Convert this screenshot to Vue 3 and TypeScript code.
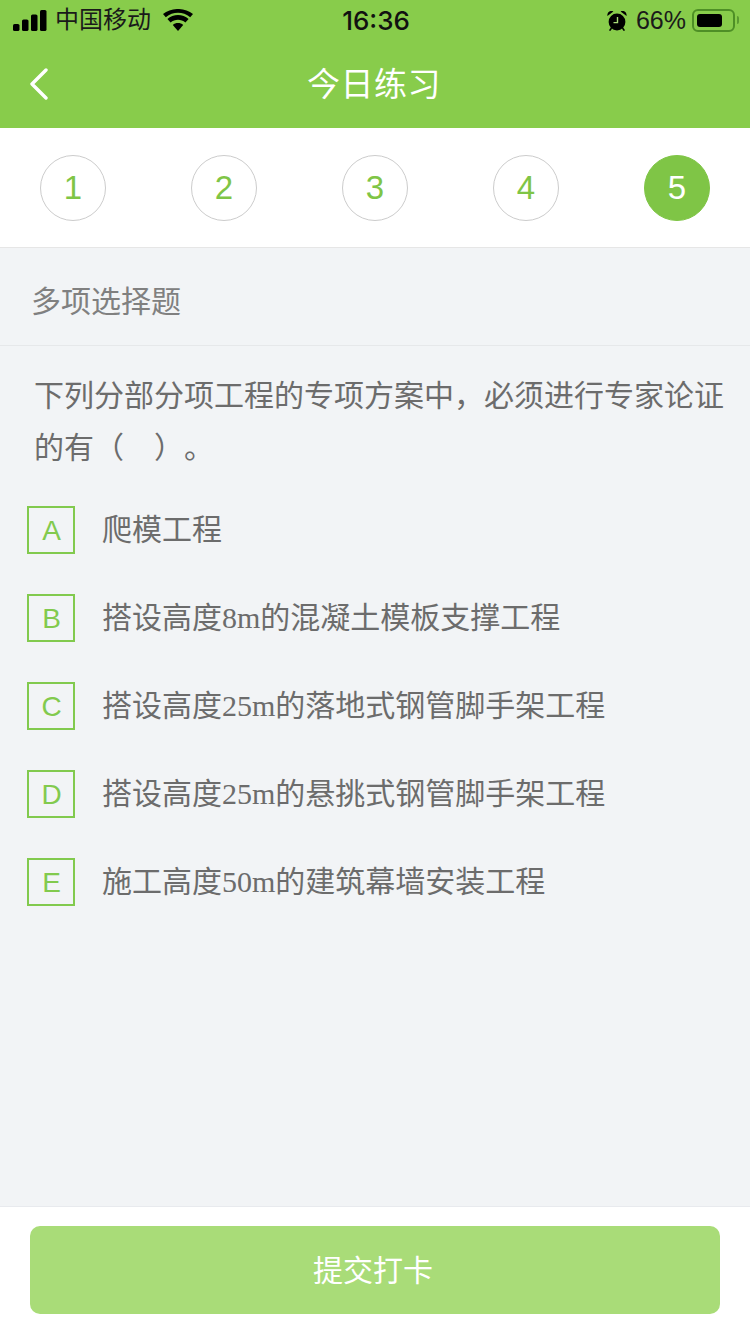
<script setup lang="ts">
const steps: number[] = [1, 2, 3, 4, 5]
const options: { key: string; text: string }[] = [
  { key: 'A', text: '爬模工程' },
  { key: 'B', text: '搭设高度8m的混凝土模板支撑工程' },
  { key: 'C', text: '搭设高度25m的落地式钢管脚手架工程' },
  { key: 'D', text: '搭设高度25m的悬挑式钢管脚手架工程' },
  { key: 'E', text: '施工高度50m的建筑幕墙安装工程' }
]
</script>

<template>
  <div class="page">
    <header class="head">
      <div class="status">
        <div class="status-left">
          <svg class="signal" width="34" height="21" viewBox="0 0 34 21">
            <rect x="0" y="14" width="6.5" height="7" rx="1.6" />
            <rect x="9" y="9.5" width="6.5" height="11.5" rx="1.6" />
            <rect x="18" y="4.5" width="6.5" height="16.5" rx="1.6" />
            <rect x="27" y="0" width="6.5" height="21" rx="1.6" />
          </svg>
          <span class="carrier">中国移动</span>
          <svg class="wifi" width="30" height="22" viewBox="0 0 30 22">
            <path d="M15 22 L9.8 16 C12.6 13.4 17.4 13.4 20.2 16 Z" />
            <path d="M7.6 13.6 L4.4 10 C10.2 4.8 19.8 4.8 25.6 10 L22.4 13.6 C18.2 9.8 11.8 9.8 7.6 13.6 Z" />
            <path d="M2.8 8.2 L0 5 C8.2 -1.7 21.8 -1.7 30 5 L27.2 8.2 C20 2.4 10 2.4 2.8 8.2 Z" />
          </svg>
        </div>
        <span class="time">16:36</span>
        <div class="status-right">
          <svg class="alarm" width="20" height="21" viewBox="0 0 20 21">
            <circle cx="10" cy="12" r="8.4" />
            <path d="M0.4 6 C0 2 3.4 0 6.4 1.4 Z M19.6 6 C20 2 16.6 0 13.6 1.4 Z" />
            <path d="M4.5 18 L2.6 20.6 M15.5 18 L17.4 20.6" stroke="#000" stroke-width="1.6" />
            <path d="M10.5 7 V12.6 H6.5" fill="none" stroke="#a9dc78" stroke-width="1.4" />
          </svg>
          <span class="percent">66%</span>
          <div class="battery">
            <div class="battery-fill"></div>
          </div>
          <div class="battery-cap"></div>
        </div>
      </div>
      <nav class="nav">
        <svg class="back" width="20" height="32" viewBox="0 0 20 32">
          <path d="M17 2 L3 16 L17 30" fill="none" stroke="#fff" stroke-width="3.4" stroke-linecap="round" stroke-linejoin="round" />
        </svg>
        <span class="nav-title">今日练习</span>
        <span></span>
      </nav>
    </header>

    <section class="steps">
      <div v-for="n in steps" :key="n" class="step" :class="{ current: n === 5 }">{{ n }}</div>
    </section>

    <main class="body">
      <div class="type">多项选择题</div>
      <p class="question">下列分部分项工程的专项方案中，必须进行专家论证的有（　）。</p>
      <ul class="options">
        <li v-for="o in options" :key="o.key" class="option">
          <span class="option-key">{{ o.key }}</span>
          <span class="option-text">{{ o.text }}</span>
        </li>
      </ul>
    </main>

    <footer class="foot">
      <button class="submit" type="button">提交打卡</button>
    </footer>
  </div>
</template>

<style>
html, body { margin: 0; padding: 0; }
</style>

<style scoped>
.page {
  width: 750px;
  height: 1334px;
  display: flex;
  flex-direction: column;
  background: #f2f4f6;
  font-family: "Liberation Sans", "Noto Sans CJK SC", sans-serif;
  overflow: hidden;
}
.head {
  height: 128px;
  background: #88cc4b;
  flex: none;
}
.status {
  height: 40px;
  display: flex;
  align-items: center;
  justify-content: space-between;
  padding: 0 11px 0 13px;
  color: #000;
}
.status-left, .status-right {
  display: flex;
  align-items: center;
  width: 240px;
}
.status-right { justify-content: flex-end; }
.signal { fill: #000; margin-right: 8px; }
.carrier { font-size: 24px; line-height: 40px; color: #1a1a1a; }
.wifi { fill: #000; margin-left: 12px; }
.time {
  font-family: Inter, "Liberation Sans", sans-serif;
  font-size: 26px;
  font-weight: 500;
  color: #111;
}
.alarm { fill: #000; margin-right: 9px; }
.percent { font-size: 25px; color: #1a1a1a; margin-right: 6px; }
.battery {
  width: 43px;
  height: 23px;
  box-sizing: border-box;
  border: 2px solid #4e8f26;
  border-radius: 6px;
  padding: 3px;
}
.battery-fill {
  width: 25px;
  height: 13px;
  background: #000;
  border-radius: 3px;
}
.battery-cap {
  width: 2px;
  height: 8px;
  margin-left: 2px;
  background: #5a9a30;
  border-radius: 0 2px 2px 0;
}
.nav {
  height: 88px;
  display: grid;
  grid-template-columns: 100px 1fr 100px;
  align-items: center;
  justify-items: center;
}
.back {
  justify-self: start;
  margin-left: 29px;
}
.nav-title {
  font-size: 33px;
  color: #fff;
  letter-spacing: 0.5px;
  margin: -4px 2px 0 0;
}
.steps {
  flex: none;
  height: 120px;
  box-sizing: border-box;
  padding: 27px 40px 0;
  display: flex;
  justify-content: space-between;
  align-items: flex-start;
  background: #fff;
  border-bottom: 1px solid #e6e6e6;
}
.step {
  width: 66px;
  height: 66px;
  box-sizing: border-box;
  border: 1px solid #ccc;
  border-radius: 50%;
  display: flex;
  align-items: center;
  justify-content: center;
  font-size: 33px;
  color: #7fc546;
}
.step.current {
  background: #7fc546;
  border-color: #7fc546;
  color: #fff;
}
.body {
  flex: 1;
  min-height: 0;
}
.type {
  height: 98px;
  box-sizing: border-box;
  padding: 0 31px;
  line-height: 108px;
  font-size: 30px;
  color: #808080;
  border-bottom: 1px solid #e6e8ea;
}
.question {
  margin: 0;
  padding: 24px 25px 0 34px;
  font-size: 30px;
  line-height: 52px;
  color: #6c6c6c;
  text-spacing-trim: space-all;
}
.options {
  list-style: none;
  margin: 0;
  padding: 32px 0 0 27px;
  display: flex;
  flex-direction: column;
  gap: 40px;
}
.option {
  display: flex;
  align-items: center;
  height: 48px;
}
.option-key {
  width: 48px;
  height: 48px;
  box-sizing: border-box;
  border: 2px solid #82ca4e;
  padding: 2px 0 0 1px;
  display: flex;
  align-items: center;
  justify-content: center;
  font-size: 28px;
  color: #82ca4e;
  flex: none;
}
.option-text {
  margin-left: 27px;
  font-family: "Liberation Serif", "Noto Sans CJK SC", serif;
  font-size: 30px;
  color: #6c6c6c;
  margin-top: -6px;
}
.foot {
  flex: none;
  height: 128px;
  box-sizing: border-box;
  padding: 19px 30px 0;
  background: #fff;
  border-top: 1px solid #e8eaee;
}
.submit {
  display: block;
  width: 690px;
  height: 88px;
  border: 0;
  padding: 0 4px 4px 0;
  border-radius: 10px;
  background: #a9dc78;
  color: #fff;
  font-family: "Liberation Sans", "Noto Sans CJK SC", sans-serif;
  font-size: 30px;
}
</style>
